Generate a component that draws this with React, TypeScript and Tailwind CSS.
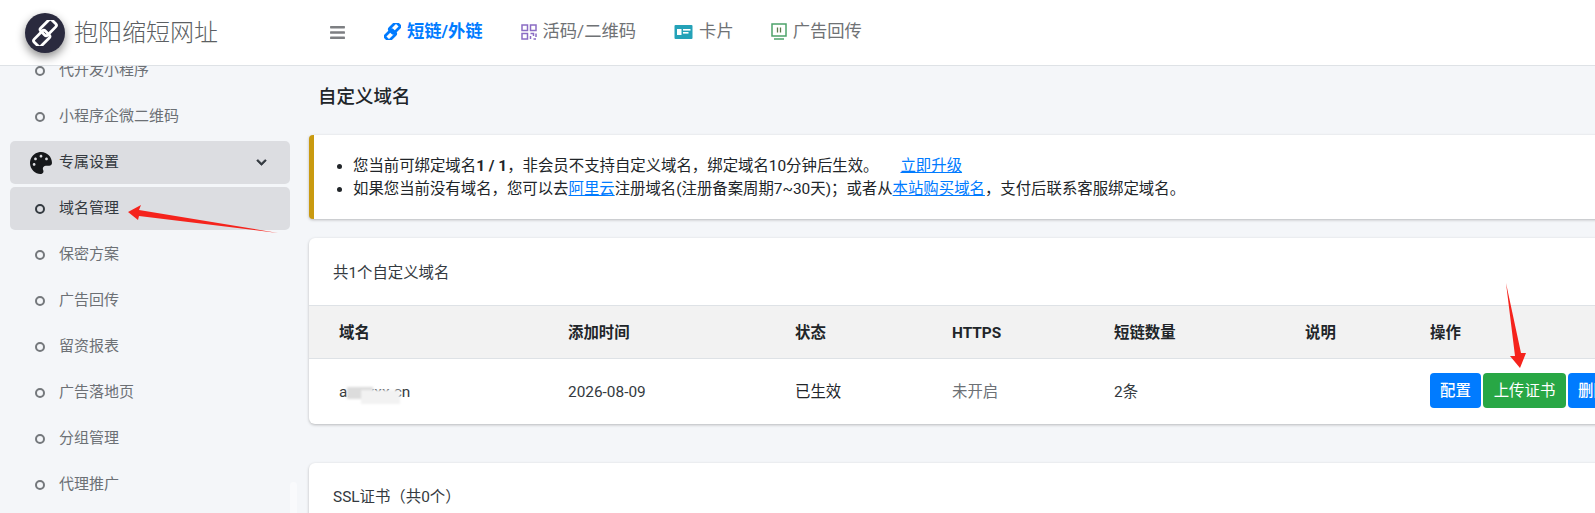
import { FaBars, FaChevronDown, FaPalette } from 'react-icons/fa';

const font = "font-['Roboto','Noto_Sans_CJK_SC',sans-serif]";

const topItems = ['代开发小程序', '小程序企微二维码'];
const bottomItems = ['保密方案', '广告回传', '留资报表', '广告落地页', '分组管理', '代理推广'];
const columns = 'grid grid-cols-[229px_227px_157px_162px_191px_125px_1fr] pl-[30px]';

function ChainIcon({ size, color, weight }: { size: number; color: string; weight: number }) {
  return (
    <svg width={size} height={size} viewBox="0 0 24 24" fill="none" stroke={color} strokeWidth={weight}>
      <g transform="rotate(-45 12 12)">
        <rect x="-1" y="9" width="14.5" height="9" rx="2" />
        <rect x="10.5" y="6" width="14.5" height="9" rx="2" />
      </g>
    </svg>
  );
}

function QrIcon() {
  return (
    <svg width="16" height="16" viewBox="0 0 16 16" fill="none" stroke="#8b6cc4" strokeWidth="1.5">
      <rect x="1" y="1" width="5.5" height="5.5" />
      <rect x="9.5" y="1" width="5.5" height="5.5" />
      <rect x="1" y="9.5" width="5.5" height="5.5" />
      <path d="M9.5 9.5h3v2.5M9.5 12v3M12.5 15h2.5M15 9.5v3.5" />
    </svg>
  );
}

function CardIcon() {
  return (
    <svg width="19" height="14" viewBox="0 0 18 14">
      <rect width="18" height="14" rx="1" fill="#24a2b8" />
      <rect x="2.5" y="4" width="4.5" height="6" fill="#fff" />
      <rect x="8.5" y="4" width="7.5" height="1.6" fill="#fff" />
      <rect x="8.5" y="7" width="5.5" height="1.6" fill="#fff" />
    </svg>
  );
}

function AdIcon() {
  return (
    <svg width="16" height="17" viewBox="0 0 16 17" fill="none">
      <rect x="1" y="1" width="14" height="12" stroke="#4ca36a" strokeWidth="1.5" />
      <path d="M3 16h10" stroke="#4ca36a" strokeWidth="1.5" />
      <path d="M6.5 4.5v5M9.5 4.5v5" stroke="#5c7a4a" strokeWidth="1.3" />
    </svg>
  );
}

function NavLink({ icon, label, active = false }: { icon: React.ReactNode; label: string; active?: boolean }) {
  return (
    <div className={`flex items-center gap-[6px] text-[17.3px] ${active ? 'font-bold text-[#007bff]' : 'text-[#6f7275]'}`}>
      {icon}
      <span>{label}</span>
    </div>
  );
}

function SubItem({ label, current = false }: { label: string; current?: boolean }) {
  return (
    <div className={`flex h-[43px] items-center rounded-[5px] pl-[25px] text-[15px] ${current ? 'bg-[#dcdde1] text-[#343a40]' : 'text-[#6c7075]'}`}>
      <span className={`mr-[14px] h-[10px] w-[10px] rounded-full border-2 ${current ? 'border-[#343a40]' : 'border-[#74787c]'}`} />
      {label}
    </div>
  );
}

export default function App() {
  return (
    <div className={`relative flex h-[513px] w-[1595px] flex-col overflow-hidden bg-[#f4f6f9] ${font}`}>
      <header className="z-10 flex h-[66px] shrink-0 items-center border-b border-[#dee2e6] bg-white">
        <div className="flex w-[329px] items-center pl-[25px]">
          <div className="flex h-10 w-10 items-center justify-center rounded-full bg-[#2a2a3e] shadow-[0_4px_10px_rgba(0,0,0,0.45)]">
            <ChainIcon size={26} color="#ffffff" weight={2.6} />
          </div>
          <span className="ml-[9px] text-[24px] font-light text-[#5c5f63]">抱阳缩短网址</span>
        </div>
        <FaBars className="text-[17px] text-[#7d7f82]" />
        <div className="ml-[38px] flex items-center pb-[2px]">
          <NavLink icon={<ChainIcon size={17} color="#007bff" weight={3.8} />} label="短链/外链" active />
          <div className="ml-[38px]"><NavLink icon={<QrIcon />} label="活码/二维码" /></div>
          <div className="ml-[38px]"><NavLink icon={<CardIcon />} label="卡片" /></div>
          <div className="ml-[37px]"><NavLink icon={<AdIcon />} label="广告回传" /></div>
        </div>
      </header>

      <div className="flex min-h-0 flex-1">
        <aside className="relative w-[309px] shrink-0 overflow-hidden pl-[10px] pr-[19px]">
          <div className="-mt-[17px] flex flex-col gap-[3px]">
            {topItems.map((t) => (
              <SubItem key={t} label={t} />
            ))}
            <div className="flex h-[43px] items-center rounded-[5px] bg-[#dcdde1] pl-[20px] pr-[23px] text-[15px] text-[#343a40]">
              <FaPalette className="mr-[7px] text-[22px] text-[#16181b]" />
              <span className="flex-1">专属设置</span>
              <FaChevronDown className="text-[11px]" stroke="currentColor" strokeWidth={30} />
            </div>
            <SubItem label="域名管理" current />
            {bottomItems.map((t) => (
              <SubItem key={t} label={t} />
            ))}
          </div>
          <div className="absolute bottom-0 left-[290px] top-[416px] w-[7px] rounded-t bg-[#f9fafc]" />
        </aside>

        <main className="w-[1400px] shrink-0 text-[15.4px] text-[#343a40]">
          <h1 className="mt-[18px] text-[18.5px] font-medium leading-[26px] text-[#212529]">
            <span className="ml-[9px]">自定义域名</span>
          </h1>
          <div className="mt-[25px] flex h-[84px] flex-col justify-center rounded-[4px] border-l-[5px] border-[#c99a10] bg-white pl-[19px] pt-[2px] shadow-[0_1px_3px_rgba(0,0,0,0.25)]">
            <ul className="list-disc pl-[20px] leading-[23px] text-[#212529]">
              <li>
                您当前可绑定域名<b>1 / 1</b>，非会员不支持自定义域名，绑定域名10分钟后生效。
                <a className="ml-[22px] text-[#007bff] underline">立即升级</a>
              </li>
              <li>
                如果您当前没有域名，您可以去<a className="text-[#007bff] underline">阿里云</a>注册域名(注册备案周期7~30天)；或者从<a className="text-[#007bff] underline">本站购买域名</a>，支付后联系客服绑定域名。
              </li>
            </ul>
          </div>

          <section className="mt-[19px] rounded-[6px] bg-white shadow-[0_1px_3px_rgba(0,0,0,0.25)]">
            <div className="flex h-[67px] items-center pl-[24px] pt-[4px]">共1个自定义域名</div>
            <div className={`${columns} h-[54px] items-center border-y border-[#dee2e6] bg-[#f2f2f2] pt-[4px] font-bold text-[#212529]`}>
              <div>域名</div>
              <div>添加时间</div>
              <div>状态</div>
              <div>HTTPS</div>
              <div>短链数量</div>
              <div>说明</div>
              <div>操作</div>
            </div>
            <div className={`${columns} h-[65px] items-center pt-[2px]`}>
              <div className="relative w-fit">
                a.xxxxx.cn
                <span className="absolute left-[8px] top-[6px] h-[12px] w-[26px] bg-[#dcdcdc] blur-[1px]" />
                <span className="absolute left-[22px] top-[9px] h-[14px] w-[39px] bg-[#f2f2f2] blur-[1px]" />
              </div>
              <div>2026-08-09</div>
              <div className="text-[#212529]">已生效</div>
              <div className="text-[#6c7075]">未开启</div>
              <div>2条</div>
              <div />
              <div className="mb-[5px] flex gap-[2px] font-medium text-white">
                <button className="h-[35px] w-[51px] rounded-[4px] bg-[#007bff] pt-[4px]">配置</button>
                <button className="h-[35px] w-[83px] rounded-[4px] bg-[#28a745] pt-[4px] font-normal">上传证书</button>
                <button className="h-[35px] w-[51px] rounded-[4px] bg-[#007bff] pt-[4px]">删除</button>
              </div>
            </div>
          </section>

          <section className="mt-[39px] h-[120px] rounded-[6px] bg-white pl-[24px] pt-[23px] shadow-[0_1px_3px_rgba(0,0,0,0.25)]">
            SSL证书（共0个）
          </section>
        </main>
      </div>

      {/* red annotation arrows drawn on the screenshot */}
      <svg className="pointer-events-none absolute left-0 top-0 z-20" width="1595" height="513" viewBox="0 0 1595 513">
        <path d="M128 212 L141 205 L139 210 L278 233 L139 216 L138 220 Z" fill="#f5231c" />
        <path d="M1506 283 L1521 353 L1526 353 L1520 368 L1510 356 L1515 356 Z" fill="#f5231c" />
      </svg>
    </div>
  );
}
